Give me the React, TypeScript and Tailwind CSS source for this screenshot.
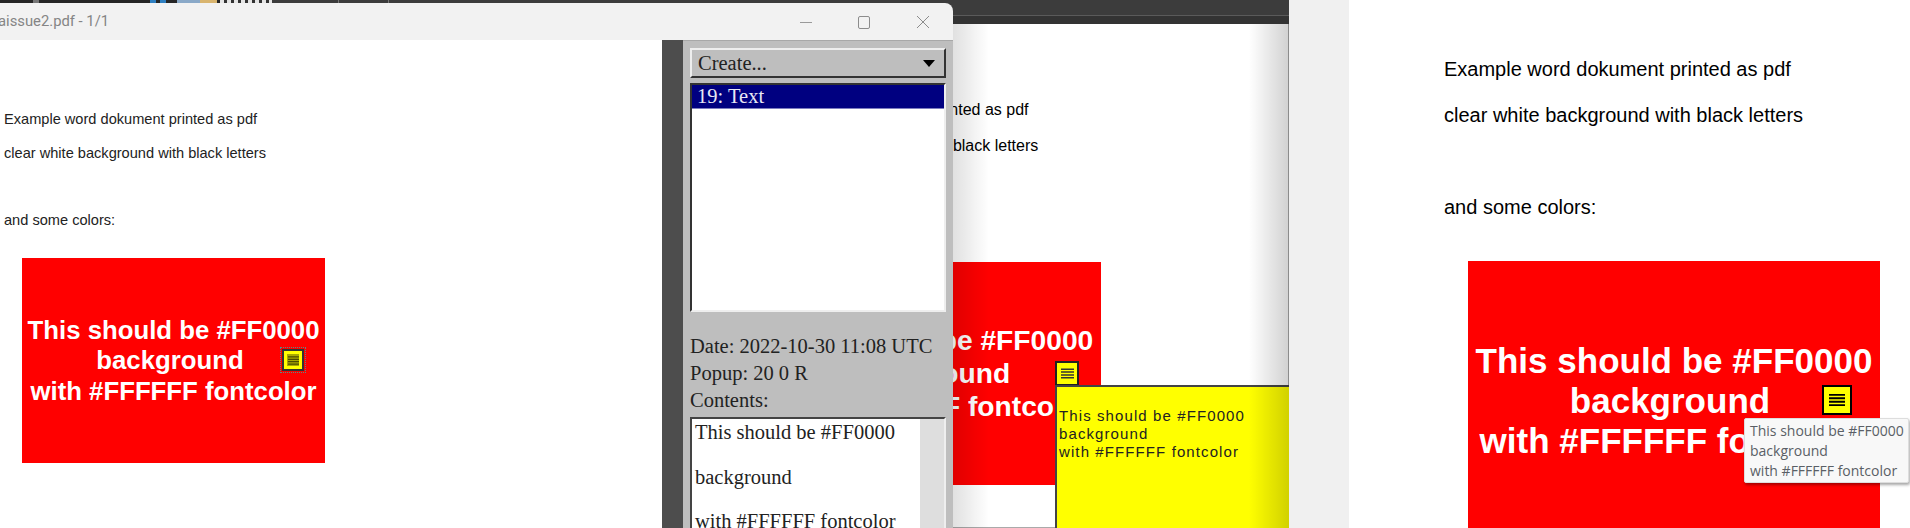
import React from "react";

const sans = "font-['Liberation_Sans',Arial,sans-serif]";
const serif = "font-['Liberation_Serif','Times_New_Roman',serif]";

function NoteGlyph({ className }: { className: string }) {
  return (
    <svg viewBox="0 0 14 12" className={className} aria-hidden="true">
      <path d="M0 1.5H14M0 4.5H14M0 7.5H14M0 10.5H14" stroke="currentColor" strokeWidth="1.6" fill="none" />
    </svg>
  );
}

function WindowControls() {
  return (
    <div className="flex items-center">
      <svg width="14" height="14" viewBox="0 0 14 14" className="mr-[44px]" aria-hidden="true">
        <path d="M1 7.5H13" stroke="#9a9a9a" strokeWidth="1" fill="none" />
      </svg>
      <svg width="14" height="14" viewBox="0 0 14 14" className="mr-[45px]" aria-hidden="true">
        <rect x="1.5" y="1.5" width="11" height="12" rx="1.5" stroke="#8c8c8c" strokeWidth="1" fill="none" />
      </svg>
      <svg width="14" height="14" viewBox="0 0 14 14" className="mr-[23px]" aria-hidden="true">
        <path d="M1 1L13 13M13 1L1 13" stroke="#8c8c8c" strokeWidth="1" fill="none" />
      </svg>
    </div>
  );
}

function TopStrip() {
  return (
    <div className="flex h-[3px] bg-[#262626]">
      <div className="ml-[33px] w-[6px] bg-[#777]" />
      <div className="ml-[111px] w-[6px] bg-[#2f7fc0]" />
      <div className="ml-[4px] w-[6px] bg-[#2f7fc0]" />
      <div className="ml-[11px] w-[23px] bg-[#8aa9c8]" />
      <div className="w-[17px] bg-[#d9b56f]" />
      <div className="ml-[3px] w-[52px] bg-[repeating-linear-gradient(90deg,#e5e5e5_0,#e5e5e5_4px,#333_4px,#333_7px)]" />
      <div className="flex flex-1 bg-[#3c3c3c]">
        <div className="ml-[66px] w-[1px] bg-[#777]" />
        <div className="ml-[49px] w-[1px] bg-[#777]" />
      </div>
    </div>
  );
}

function SidePanel() {
  return (
    <div className={`${serif} relative flex h-full w-[270px] flex-col overflow-hidden border-t border-[#a8a8a8] bg-[#bebebe] pl-[7px] pr-[7px] text-[20.5px] text-[#222]`}>
      <div className="mt-[7px] flex h-[30px] w-[256px] items-center justify-between border-2 border-b-[#333] border-l-[#eee] border-r-[#333] border-t-[#eee] pl-[6px] pr-[9px]">
        <span>Create...</span>
        <svg width="12" height="7" viewBox="0 0 12 7" aria-hidden="true">
          <path d="M0 0H12L6 7Z" fill="#000" />
        </svg>
      </div>
      <div className="mt-[5px] h-[229px] w-[256px] shrink-0 border-2 border-b-[#eee] border-l-[#333] border-r-[#eee] border-t-[#333] bg-white">
        <div className="flex h-[24px] items-center border-b border-b-[#7c7cc0] bg-[#000080] pl-[5px] text-[#e8e8f4]">19: Text</div>
      </div>
      <div className="mt-[20px] flex h-[28px] items-center whitespace-nowrap">Date: 2022-10-30 11:08 UTC</div>
      <div className="flex h-[27px] items-center whitespace-nowrap">Popup: 20 0 R</div>
      <div className="flex h-[27px] items-center whitespace-nowrap">Contents:</div>
      <div className="mt-[3px] flex min-h-[120px] w-[256px] flex-1 border-2 border-b-0 border-l-[#444] border-r-[#eee] border-t-[#444] bg-white">
        <div className="flex-1 pl-[3px] pt-[2px] text-[#222]">
          <div className="h-[22.3px] whitespace-nowrap leading-[22px]">This should be #FF0000</div>
          <div className="h-[22.3px]" />
          <div className="h-[22.3px] whitespace-nowrap leading-[22px]">background</div>
          <div className="h-[22.3px]" />
          <div className="h-[22.3px] whitespace-nowrap leading-[22px]">with #FFFFFF fontcolor</div>
        </div>
        <div className="w-[24px] bg-[#dedede]" />
      </div>
    </div>
  );
}

function LeftWindow() {
  return (
    <div className="flex w-[953px] shrink-0 flex-col bg-[#3c3c3c]">
      <TopStrip />
      <div className="flex h-[37px] items-center justify-between rounded-tr-lg bg-[#f2f2f2]">
        <span className="ml-[-2px] whitespace-nowrap font-['Roboto',sans-serif] text-[14.8px] text-[#858585]">aissue2.pdf - 1/1</span>
        <WindowControls />
      </div>
      <div className="flex min-h-0 flex-1">
        <div className={`${sans} w-[662px] bg-white text-[14.6px] text-[#222]`}>
          <div className="ml-[4px] mt-[69px] h-[20px] whitespace-nowrap leading-[20px]">Example word dokument printed as pdf</div>
          <div className="ml-[4px] mt-[14px] h-[20px] whitespace-nowrap leading-[20px]">clear white background with black letters</div>
          <div className="ml-[4px] mt-[47px] h-[20px] whitespace-nowrap leading-[20px]">and some colors:</div>
          <div className="relative ml-[22px] mt-[28px] flex h-[205px] w-[303px] flex-col items-center justify-center bg-[#ff0000] text-[25.75px] font-bold leading-[30.5px] text-white">
            <div className="whitespace-nowrap">This should be #FF0000</div>
            <div className="mr-[7px] whitespace-nowrap">background</div>
            <div className="whitespace-nowrap">with #FFFFFF fontcolor</div>
            <div className="absolute left-[258px] top-[89px] flex h-[26px] w-[26px] items-center justify-center border border-dotted border-[#5a8a8a]">
              <div className="flex h-[22px] w-[22px] items-center justify-center border-2 border-[#333] bg-[#ffff00]">
                <div className="flex h-[12px] w-[12px] items-center justify-center bg-[#a8a800]">
                  <NoteGlyph className="h-[11px] w-[11px] text-[#4a4a00]" />
                </div>
              </div>
            </div>
          </div>
        </div>
        <div className="w-[21px] bg-[#4d4d4d]" />
        <SidePanel />
      </div>
    </div>
  );
}

function MiddleWindow() {
  return (
    <div className="relative flex w-[336px] shrink-0 flex-col overflow-hidden">
      <div className="h-[15px] bg-[#3c3c3c]" />
      <div className="h-[1px] bg-[#5a5a5a]" />
      <div className="h-[8px] bg-[#333]" />
      <div className={`${sans} min-h-0 flex-1 border-b border-r border-[#aaa] bg-white text-[16px] text-black`}>
        <div className="ml-[-202px] mt-[76px] h-[20px] whitespace-nowrap leading-[20px]">Example word dokument printed as pdf</div>
        <div className="ml-[-202px] mt-[16px] h-[20px] whitespace-nowrap leading-[20px]">clear white background with black letters</div>
        <div className="relative ml-[-187px] mt-[106px] flex h-[223px] w-[335px] flex-col items-center justify-center bg-[#ff0000] text-[28.2px] font-bold leading-[33px] text-white">
          <div className="whitespace-nowrap">This should be #FF0000</div>
          <div className="mr-[8px] whitespace-nowrap">background</div>
          <div className="whitespace-nowrap">with #FFFFFF fontcolor</div>
        </div>
      </div>
      <div className="absolute left-[102px] top-[361px] flex h-[25px] w-[24px] items-center justify-center border-2 border-[#222] bg-[#ffff00]">
        <NoteGlyph className="h-[13px] w-[13px] text-[#333]" />
      </div>
      <div className={`${sans} absolute bottom-0 left-[102px] right-0 top-[385px] border-l-2 border-t-2 border-[#444] bg-[#ffff00] pl-[2px] pt-[20px] text-[15px] leading-[18px] tracking-[1.1px] text-[#222]`}>
        <div className="whitespace-nowrap">This should be #FF0000</div>
        <div className="whitespace-nowrap">background</div>
        <div className="whitespace-nowrap">with #FFFFFF fontcolor</div>
      </div>
      <div className="pointer-events-none absolute bottom-0 left-0 top-[24px] w-[36px] bg-gradient-to-r from-black/12 to-transparent" />
      <div className="pointer-events-none absolute bottom-0 right-0 top-[24px] w-[40px] bg-gradient-to-l from-black/18 to-transparent" />
    </div>
  );
}

function RightPage() {
  return (
    <div className={`${sans} relative min-w-0 flex-1 overflow-hidden bg-white text-[20px] text-black`}>
      <div className="ml-[95px] mt-[57px] h-[24px] whitespace-nowrap leading-[24px]">Example word dokument printed as pdf</div>
      <div className="ml-[95px] mt-[22px] h-[24px] whitespace-nowrap leading-[24px]">clear white background with black letters</div>
      <div className="ml-[95px] mt-[68px] h-[24px] whitespace-nowrap leading-[24px]">and some colors:</div>
      <div className="ml-[119px] mt-[42px] flex h-[267px] w-[412px] flex-col items-center bg-[#ff0000] pt-[80px] text-[35px] font-bold leading-[40px] text-white">
        <div className="whitespace-nowrap">This should be #FF0000</div>
        <div className="mr-[8px] whitespace-nowrap">background</div>
        <div className="whitespace-nowrap">with #FFFFFF fontcolor</div>
      </div>
      <div className="absolute left-[473px] top-[385px] flex h-[30px] w-[30px] items-center justify-center border-2 border-black bg-[#ffff00]">
        <NoteGlyph className="h-[16px] w-[16px] text-black" />
      </div>
      <div className="absolute left-[395px] top-[418px] h-[65px] w-[165px] rounded-[2px] border border-[#ddd] bg-[#f8f8f8] pl-[5px] pt-[2px] font-['Open_Sans',sans-serif] text-[14px] leading-[20px] text-[#5a5f66] shadow-[1px_2px_3px_rgba(0,0,0,0.35)]">
        <div className="whitespace-nowrap">This should be #FF0000</div>
        <div className="whitespace-nowrap">background</div>
        <div className="whitespace-nowrap">with #FFFFFF fontcolor</div>
      </div>
    </div>
  );
}

export default function App() {
  return (
    <div className="flex h-[528px] w-[1910px] overflow-hidden bg-[#f0f0f0]">
      <LeftWindow />
      <MiddleWindow />
      <div className="w-[60px] shrink-0 bg-[#f0f0f0]" />
      <RightPage />
    </div>
  );
}
